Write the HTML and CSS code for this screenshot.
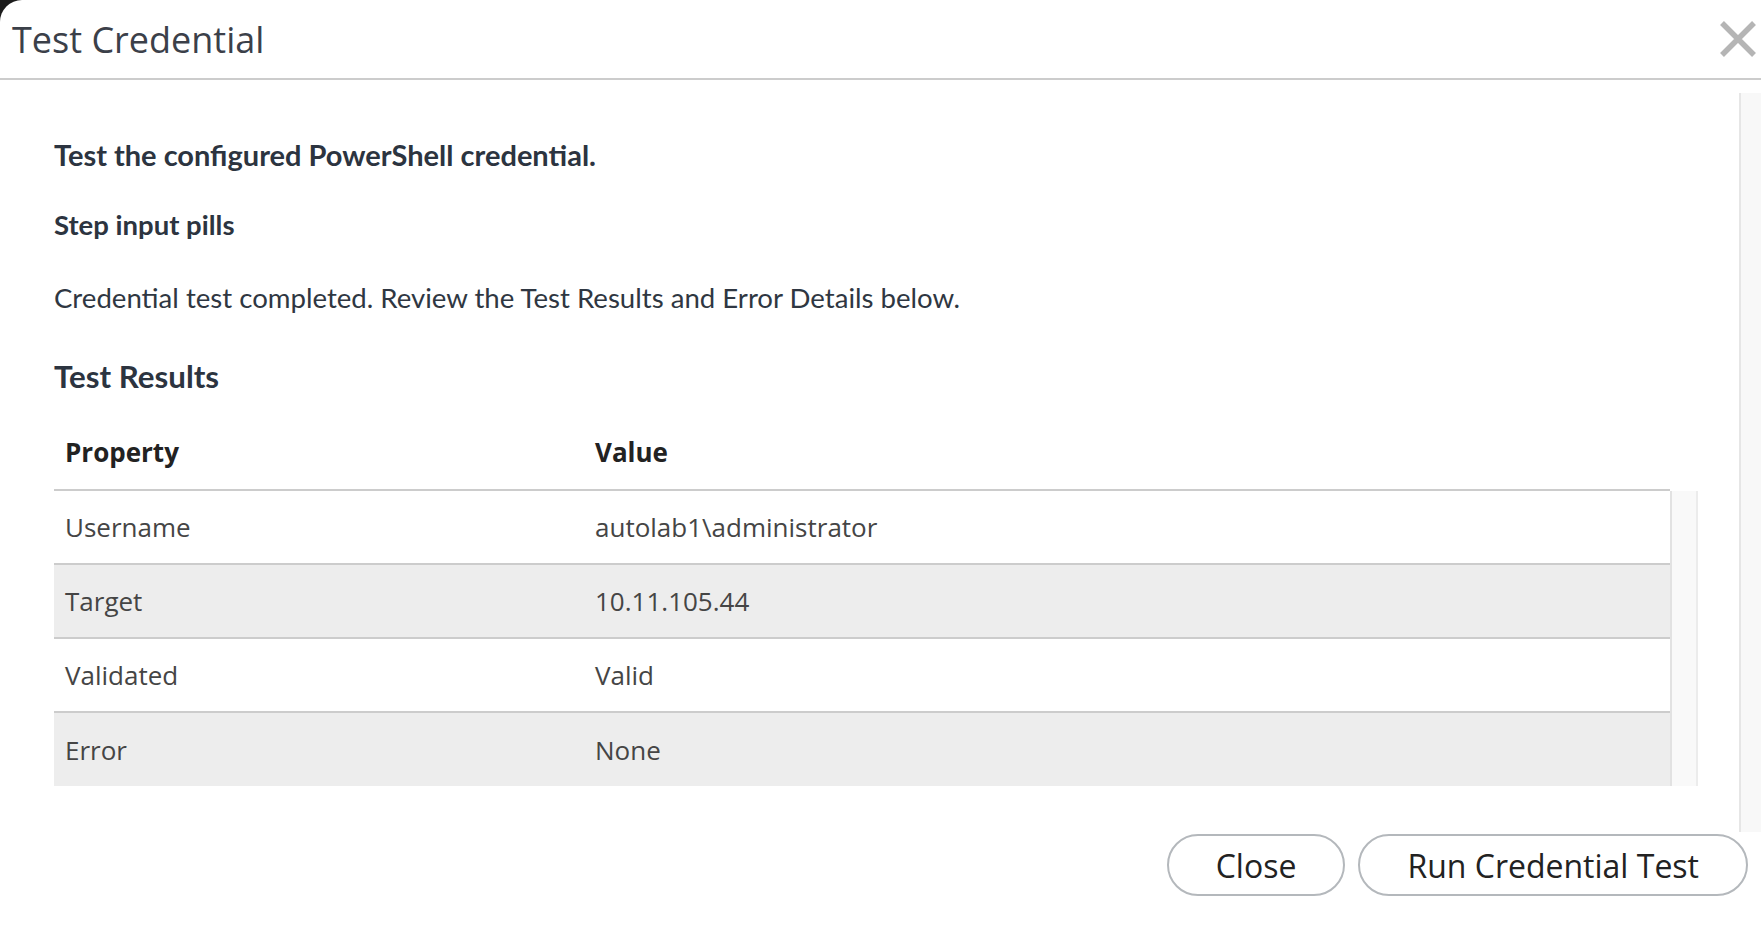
FILE: index.html
```html
<!DOCTYPE html>
<html lang="en">
<head>
<meta charset="utf-8">
<title>Test Credential</title>
<link rel="stylesheet" href="styles.css">
</head>
<body>
<div class="modal">
  <header class="modal-header">
    <h1 class="modal-title">Test Credential</h1>
    <button class="modal-close" aria-label="Close">
      <svg width="38" height="38" viewBox="0 0 38 38" aria-hidden="true">
        <path d="M3 3 L35 35 M35 3 L3 35" stroke="#b5b5b5" stroke-width="5.5" fill="none"/>
      </svg>
    </button>
  </header>

  <div class="modal-body">
    <div class="body-scroll">
      <h2 class="intro">Test the configured PowerShell credential.</h2>
      <h3 class="step-label">Step input pills</h3>
      <p class="status">Credential test completed. Review the Test Results and Error Details below.</p>
      <h3 class="section-title">Test Results</h3>

      <div class="results">
        <div class="results-head">
          <div class="cell cell-prop">Property</div>
          <div class="cell">Value</div>
        </div>
        <div class="results-rows">
          <div class="row">
            <div class="cell cell-prop">Username</div>
            <div class="cell">autolab1\administrator</div>
          </div>
          <div class="row row-alt">
            <div class="cell cell-prop">Target</div>
            <div class="cell">10.11.105.44</div>
          </div>
          <div class="row">
            <div class="cell cell-prop">Validated</div>
            <div class="cell">Valid</div>
          </div>
          <div class="row row-alt">
            <div class="cell cell-prop">Error</div>
            <div class="cell">None</div>
          </div>
        </div>
        <div class="results-track"></div>
      </div>
    </div>
    <div class="body-track"></div>
  </div>

  <footer class="modal-footer">
    <button class="pill-btn">Close</button>
    <button class="pill-btn">Run Credential Test</button>
  </footer>
</div>
</body>
</html>
```

FILE: styles.css
```css
html, body {
  margin: 0;
  padding: 0;
  height: 100%;
}

body {
  background: #1c1c1c;
  font-family: "Open Sans", "Liberation Sans", sans-serif;
  overflow: hidden;
}

.modal {
  background: #ffffff;
  border-top-left-radius: 22px;
  height: 100%;
  display: flex;
  flex-direction: column;
}

/* Header */
.modal-header {
  height: 78px;
  border-bottom: 2px solid #cccccc;
  display: flex;
  align-items: center;
  justify-content: space-between;
  padding: 0 4px 0 12px;
  flex: none;
}

.modal-title {
  margin: 0;
  font-size: 36px;
  font-weight: 400;
  color: #3b4049;
  line-height: 44px;
  padding-top: 2px;
}

.modal-close {
  border: 0;
  background: none;
  padding: 0;
  width: 38px;
  height: 38px;
  display: block;
  cursor: pointer;
}

.modal-close svg {
  display: block;
}

/* Body */
.modal-body {
  margin-top: 13px;
  height: 739px;
  display: flex;
  flex: none;
}

.body-scroll {
  flex: 1;
  padding: 45px 41px 0 54px;
}

.body-track {
  width: 20px;
  background: #f8f8f8;
  border-left: 2px solid #e6e6e6;
}

.intro,
.step-label,
.status,
.section-title {
  font-family: "Lato", "Liberation Sans", sans-serif;
  color: #2c3440;
  margin: 0;
}

.intro {
  font-size: 29px;
  font-weight: 700;
  line-height: 34px;
}

.step-label {
  font-size: 27.5px;
  font-weight: 700;
  line-height: 32px;
  margin-top: 37px;
}

.status {
  font-size: 27.6px;
  font-weight: 400;
  line-height: 32px;
  margin-top: 41px;
  color: #2f3742;
}

.section-title {
  font-size: 31.3px;
  font-weight: 700;
  line-height: 34px;
  margin-top: 45px;
}

/* Results table */
.results {
  margin-top: 21px;
  display: grid;
  grid-template-columns: 1fr 28px;
}

.results-head {
  grid-column: 1;
  display: flex;
  align-items: center;
  height: 75px;
  border-bottom: 2px solid #cccccc;
  font-weight: 700;
  color: #222222;
}

.results-rows {
  grid-column: 1;
  grid-row: 2;
}

.results-track {
  grid-column: 2;
  grid-row: 2;
  background: #f9f9f9;
  border-left: 2px solid #e2e2e2;
  border-right: 2px solid #ececec;
}

.row {
  display: flex;
  align-items: center;
  height: 72px;
  background: #ffffff;
  color: #454545;
}

.row:last-child {
  height: 73px;
}

.row + .row {
  border-top: 2px solid #cccccc;
}

.row-alt {
  background: #ededed;
}

.cell {
  font-size: 26px;
  padding: 0 11px;
  line-height: 34px;
}

.cell-prop {
  width: 508px;
}

/* Footer */
.modal-footer {
  display: flex;
  justify-content: flex-end;
  gap: 13px;
  padding: 2px 13px 0 0;
}

.pill-btn {
  height: 62px;
  border: 2px solid #b4b8bc;
  border-radius: 31px;
  background: #ffffff;
  padding: 0 47px;
  font-family: "Open Sans", "Liberation Sans", sans-serif;
  font-size: 32px;
  color: #222222;
  cursor: pointer;
}
```
